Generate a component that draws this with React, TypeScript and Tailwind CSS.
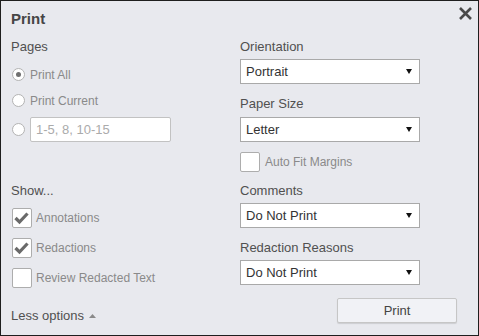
import React from "react";

const font = { fontFamily: '"Liberation Sans", Arial, sans-serif' };

function Radio({ checked }: { checked?: boolean }) {
  return (
    <div className="ml-[1px] flex h-[13px] w-[13px] shrink-0 items-center justify-center rounded-full border border-[#b3b3b3] bg-white">
      {checked && <div className="h-[5px] w-[5px] rounded-full bg-[#707070]" />}
    </div>
  );
}

function Check({ checked }: { checked?: boolean }) {
  return (
    <div className="flex h-[20px] w-[20px] shrink-0 items-center justify-center rounded-[2px] border border-[#adadad] bg-white">
      {checked && (
        <svg width="18" height="18" viewBox="0 0 18 18">
          <polyline points="2.5,9 6.5,13 14.5,4.5" fill="none" stroke="#6a6a6a" strokeWidth="3.2" strokeLinejoin="miter" />
        </svg>
      )}
    </div>
  );
}

function Select({ value, className = "" }: { value: string; className?: string }) {
  return (
    <div className={`relative flex h-[25px] w-[180px] items-center border border-[#a9a9a9] bg-white pl-[5px] text-[13px] text-[#333] ${className}`}>
      <span>{value}</span>
      <svg className="absolute right-[7px] top-[9px]" width="6" height="5" viewBox="0 0 6 5">
        <polygon points="0,0 6,0 3,5" fill="#111" />
      </svg>
    </div>
  );
}

export default function App() {
  return (
    <div
      style={font}
      className="relative box-border h-[336px] w-[479px] border border-[#1e1e1e] bg-[#e8e9ee] pl-[10px] pt-[9px]"
    >
      <div className="h-[18px] text-[15px] font-bold leading-[18px] text-[#454545]">Print</div>
      <svg className="absolute left-[457px] top-[5px]" width="15" height="15" viewBox="0 0 15 15">
        <path d="M2 2 L13 13 M13 2 L2 13" stroke="#4a4a4a" strokeWidth="2.6" />
      </svg>

      <div className="mt-[10px] grid grid-cols-[229px_180px]">
        {/* Left column */}
        <div className="flex flex-col">
          <div className="h-[17px] text-[13px] leading-[17px] text-[#505050]">Pages</div>
          <div className="mt-[7px] flex h-[25px] items-center gap-[5px]">
            <Radio checked />
            <span className="text-[12px] text-[#8a8a8a]">Print All</span>
          </div>
          <div className="mt-[1px] flex h-[25px] items-center gap-[5px]">
            <Radio />
            <span className="text-[12px] text-[#8a8a8a]">Print Current</span>
          </div>
          <div className="mt-[4px] flex h-[25px] items-center gap-[5px]">
            <Radio />
            <div className="flex h-[25px] w-[141px] items-center rounded-[2px] border border-[#c2c2c2] bg-white pl-[5px] text-[13px] text-[#ababab]">
              1-5, 8, 10-15
            </div>
          </div>
          <div className="mt-[40px] h-[17px] text-[13px] leading-[17px] text-[#505050]">Show...</div>
          <div className="ml-[1px] mt-[9px] flex h-[20px] items-center gap-[4px]">
            <Check checked />
            <span className="text-[12px] text-[#8a8a8a]">Annotations</span>
          </div>
          <div className="ml-[1px] mt-[10px] flex h-[20px] items-center gap-[4px]">
            <Check checked />
            <span className="text-[12px] text-[#8a8a8a]">Redactions</span>
          </div>
          <div className="ml-[1px] mt-[10px] flex h-[20px] items-center gap-[4px]">
            <Check />
            <span className="text-[12px] text-[#8a8a8a]">Review Redacted Text</span>
          </div>
        </div>

        {/* Right column */}
        <div className="flex flex-col">
          <div className="h-[17px] text-[13px] leading-[17px] text-[#505050]">Orientation</div>
          <Select value="Portrait" className="mt-[4px]" />
          <div className="mt-[11px] h-[17px] text-[13px] leading-[17px] text-[#505050]">Paper Size</div>
          <Select value="Letter" className="mt-[5px]" />
          <div className="mt-[10px] flex h-[20px] items-center gap-[5px]">
            <Check />
            <span className="text-[12px] text-[#8a8a8a]">Auto Fit Margins</span>
          </div>
          <div className="mt-[10px] h-[17px] text-[13px] leading-[17px] text-[#505050]">Comments</div>
          <Select value="Do Not Print" className="mt-[4px]" />
          <div className="mt-[11px] h-[17px] text-[13px] leading-[17px] text-[#505050]">Redaction Reasons</div>
          <Select value="Do Not Print" className="mt-[4px]" />
        </div>
      </div>

      <div className="mt-[10px] flex items-start pr-[21px]">
        <div className="mt-[9px] flex h-[17px] items-center gap-[5px] text-[13px] leading-[17px] text-[#505050]">
          <span>Less options</span>
          <svg width="7" height="4" viewBox="0 0 7 4">
            <polygon points="0,4 7,4 3.5,0" fill="#8a8a8a" />
          </svg>
        </div>
        <button className="ml-auto flex h-[25px] w-[120px] items-center justify-center rounded-[2px] border border-[#c6c6c6] bg-[#f1f2f6] text-[13px] text-[#444] shadow-[0_1px_1px_rgba(0,0,0,0.12)]">
          Print
        </button>
      </div>
    </div>
  );
}
